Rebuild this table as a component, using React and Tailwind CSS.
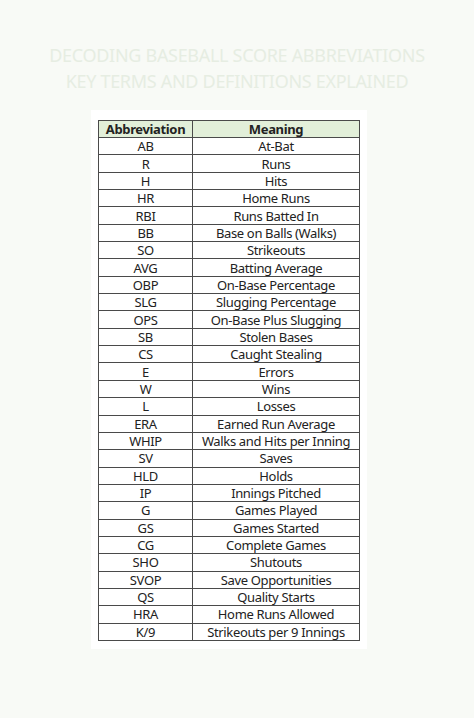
import React from "react";

const rows = [
	["AB", "At-Bat"],
	["R", "Runs"],
	["H", "Hits"],
	["HR", "Home Runs"],
	["RBI", "Runs Batted In"],
	["BB", "Base on Balls (Walks)"],
	["SO", "Strikeouts"],
	["AVG", "Batting Average"],
	["OBP", "On-Base Percentage"],
	["SLG", "Slugging Percentage"],
	["OPS", "On-Base Plus Slugging"],
	["SB", "Stolen Bases"],
	["CS", "Caught Stealing"],
	["E", "Errors"],
	["W", "Wins"],
	["L", "Losses"],
	["ERA", "Earned Run Average"],
	["WHIP", "Walks and Hits per Inning"],
	["SV", "Saves"],
	["HLD", "Holds"],
	["IP", "Innings Pitched"],
	["G", "Games Played"],
	["GS", "Games Started"],
	["CG", "Complete Games"],
	["SHO", "Shutouts"],
	["SVOP", "Save Opportunities"],
	["QS", "Quality Starts"],
	["HRA", "Home Runs Allowed"],
	["K/9", "Strikeouts per 9 Innings"],
];

export default function App() {
	return (
		<div className="w-[474px] h-[718px] bg-[#f8faf6] flex flex-col items-center font-['Noto_Sans',sans-serif]">
			{/* Title */}
			<div className="mt-[42px] text-center text-[18px] leading-[26px] text-[#e6ede2] tracking-[-0.3px]">
				<p>DECODING BASEBALL SCORE ABBREVIATIONS</p>
				<p>KEY TERMS AND DEFINITIONS EXPLAINED</p>
			</div>

			{/* Card */}
			<div className="self-start ml-[91px] mt-[16px] w-[276px] bg-white px-[7px] pt-[10px] pb-[8px]">
				<table className="w-[262px] border-collapse text-[13px] text-[#222] tracking-[-0.35px]">
					<thead>
						<tr className="bg-[#e2efd9] h-[17px]">
							<th className="w-[94px] border border-[#4a4a4a] font-bold leading-[16px]">Abbreviation</th>
							<th className="border border-[#4a4a4a] font-bold leading-[16px]">Meaning</th>
						</tr>
					</thead>
					<tbody>
						{rows.map(([abbr, meaning]) => (
							<tr key={abbr} className="h-[17.35px]">
								<td className="border border-[#4a4a4a] text-center leading-[16px]">{abbr}</td>
								<td className="border border-[#4a4a4a] text-center leading-[16px]">{meaning}</td>
							</tr>
						))}
					</tbody>
				</table>
			</div>
		</div>
	);
}
